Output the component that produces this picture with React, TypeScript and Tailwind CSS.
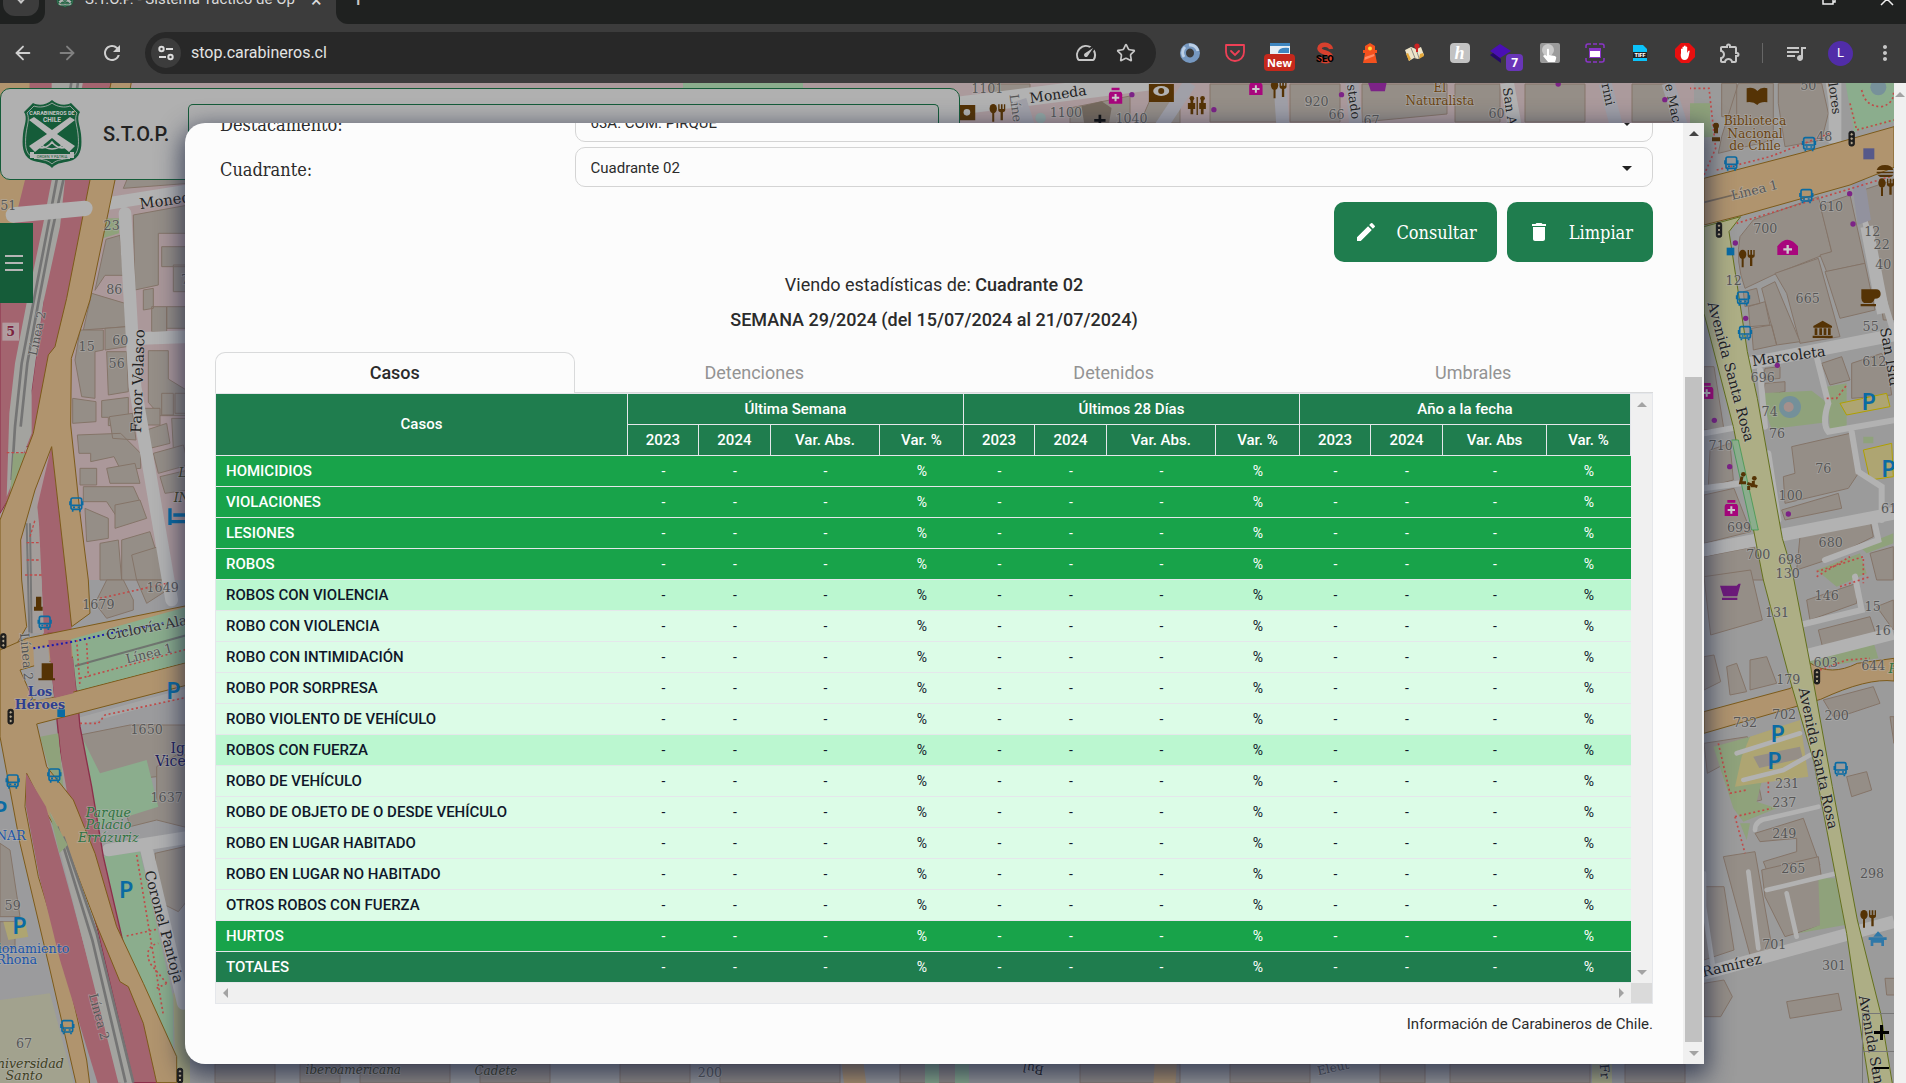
import React from "react";
import { ArrowLeft, ArrowRight, Star } from "lucide-react";
import {
  MdRefresh,
  MdOutlineSpeed,
  MdOutlineExtension,
  MdQueueMusic,
  MdMoreVert,
  MdEdit,
  MdDelete,
} from "react-icons/md";

type Row = { label: string; tone: "main" | "sub" | "item" | "total" };

const rows: Row[] = [
  { label: "HOMICIDIOS", tone: "main" },
  { label: "VIOLACIONES", tone: "main" },
  { label: "LESIONES", tone: "main" },
  { label: "ROBOS", tone: "main" },
  { label: "ROBOS CON VIOLENCIA", tone: "sub" },
  { label: "ROBO CON VIOLENCIA", tone: "item" },
  { label: "ROBO CON INTIMIDACIÓN", tone: "item" },
  { label: "ROBO POR SORPRESA", tone: "item" },
  { label: "ROBO VIOLENTO DE VEHÍCULO", tone: "item" },
  { label: "ROBOS CON FUERZA", tone: "sub" },
  { label: "ROBO DE VEHÍCULO", tone: "item" },
  { label: "ROBO DE OBJETO DE O DESDE VEHÍCULO", tone: "item" },
  { label: "ROBO EN LUGAR HABITADO", tone: "item" },
  { label: "ROBO EN LUGAR NO HABITADO", tone: "item" },
  { label: "OTROS ROBOS CON FUERZA", tone: "item" },
  { label: "HURTOS", tone: "main" },
  { label: "TOTALES", tone: "total" },
];

const toneClass = {
  main: "bg-[#18a34a] text-white",
  sub: "bg-[#bbf7d0] text-[#0f172a]",
  item: "bg-[#dcfce7] text-[#0f172a]",
  total: "bg-[#1f7d4e] text-white",
};

const groups = [
  { title: "Última Semana", abs: "Var. Abs." },
  { title: "Últimos 28 Días", abs: "Var. Abs." },
  { title: "Año a la fecha", abs: "Var. Abs" },
];

/* ---------- Map ---------- */

const ROAD = "#b2b2b2";
const ORANGE = "#b0946e";
const RED = "#a3646f";
const BUILD = "#958e87";
const BLUE = "#0a6ba3";
const BROWN = "#553305";

type LabelProps = { x: number; y: number; t: string; s?: number; r?: number; c?: string; i?: boolean; b?: boolean };

function Label({ x, y, t, s = 38, r = 0, c = "#565656", i, b }: LabelProps) {
  return (
    <text
      x={x}
      y={y}
      transform={`rotate(${r} ${x} ${y})`}
      textAnchor="middle"
      dominantBaseline="central"
      fontSize={s}
      fill={c}
      stroke="#b4b4b4"
      strokeOpacity={0.5}
      strokeWidth={5}
      paintOrder="stroke"
      fontStyle={i ? "italic" : "normal"}
      fontWeight={b ? 700 : 400}
    >
      {t}
    </text>
  );
}

function Bus({ x, y }: { x: number; y: number }) {
  return (
    <g transform={`translate(${x - 18} ${y - 21})`}>
      <rect x="2" y="2" width="32" height="34" rx="5" fill="none" stroke={BLUE} strokeWidth="5" />
      <path d="M-1 12v12M37 12v12M4 24h28M7 38v5M29 38v5" stroke={BLUE} strokeWidth="5" />
      <path d="M8 30h6M22 30h6" stroke={BLUE} strokeWidth="5" />
    </g>
  );
}

function Parking({ x, y }: { x: number; y: number }) {
  return (
    <text x={x} y={y} textAnchor="middle" dominantBaseline="central" fontSize={66} fontWeight={700} fill={BLUE} fontFamily="Lato, sans-serif">
      P
    </text>
  );
}

function Light({ x, y }: { x: number; y: number }) {
  return (
    <g transform={`translate(${x} ${y})`} fill="#b2a58c" stroke="#1c1c1c" strokeWidth="3">
      <rect x="-8" y="-22" width="16" height="44" rx="6" fill="#1c1c1c" />
      <circle cy="-13" r="5" />
      <circle r="5" />
      <circle cy="13" r="5" />
    </g>
  );
}

function Food({ x, y }: { x: number; y: number }) {
  return (
    <g transform={`translate(${x} ${y})`} fill={BROWN}>
      <ellipse cx="-12" cy="-13" rx="11" ry="14" />
      <path d="M-15 0h6v26h-6zM3 -26h4v14h4v-14h5v14h4v-14h4v18q0 5-7 6v24h-7V-2q-7-1-7-6z" />
    </g>
  );
}

function Pharmacy({ x, y }: { x: number; y: number }) {
  return (
    <g transform={`translate(${x} ${y})`}>
      <path d="M-12 -26h24v8h-24zM-16 -14h32q4 3 4 8v28h-40v-28q0-5 4-8z" fill="#a8067d" />
      <path d="M0 -7v22M-11 4h22" stroke="#ccc" strokeWidth="6" />
    </g>
  );
}

function Dot({ x, y }: { x: number; y: number }) {
  return <circle cx={x} cy={y} r="8" fill="#7c2387" />;
}

const leftBuildings = [
  "M370 325l20-48h190v32z",
  "M400 405l165-30v85h-90v155l-70 15z",
  "M318 478l42-12 10 120-55 0-30 45z",
  "M485 500h80v60h-80zM520 555h50v80h-50zM430 630l30-5v60l-30 5zM455 680h45v75h-45zM500 680h70v65h-70z",
  "M275 640l100 30 5 70-130 10z",
  "M240 750h70v60l-25 5v140l-40-5-20-110zM315 745l65-5v60l-65 10zM320 815h60l5 120-60 10z",
  "M445 812h60v85l65 40v70h-90l-35-40z",
  "M218 955l70 10v60l-70 5zM305 962l80-10v80l-60 5v-25h-20z",
  "M328 1010l70-10 10 80-70-5zM232 1065l130-5 60 60v45l-60 5-20-40-70 15 0-25-35 0z",
  "M240 1165h50v50h-50zM320 1165l85-15 15 60-90 0z",
  "M250 1220l150 0 20 45-60 60-40-60-70 0zM255 1285l70 30v60l-65 10z",
  "M345 1275l75-15 20 55-95 30zM300 1390l55-10 10 120-65 0zM365 1380l85-25 45 145-130 0z",
  "M395 1425l80-25 25 100h-90z",
  "M430 985h50v50h-60zM485 940h35v65h-35zM525 940h40v60h-40zM440 1050l60-20 10 60-60 15zM515 1015h50v90h-45z",
  "M460 1120l90-25 15 60-90 25zM480 1190l85-20v60l-70 10z",
  "M320 1500l50 0 30 60v30l-80 25-35-45zM410 1500l80 0 20 25-70 45z",
  "M240 1965l150-30h180v80l-50 70-100 10-140 40z",
  "M470 2060l60-35h40v220l-100-25-80 20-10-35 90-30z",
  "M465 2320l110-25v150l-40 50-60-30z",
  "M0 2290l30 20 30 200-60 0z",
  "M0 2525h45v80H0z",
];

const rightBuildings = [
  "M95 10h45v100H95zM145 10h105v170l-165 40 10-50z",
  "M265 10h130l20 90-20 80-110 20-20-130z",
  "M150 470l40-50 195-70 40 165-165 65-95 45q-30-80-15-155z",
  "M390 375l90-30 45 205-115 25-20-50 35-10z",
  "M520 330l90-30v420h-30z",
  "M255 580l130-45 65 235-120 20-40-150z",
  "M405 575l120-25 30 140-105 25z",
  "M160 635l40-10 10 45-45 10zM175 680l50-15 15 70-60 5zM185 745l60-10 15 60-70 15zM215 625l40-20 75 180-70 10z",
  "M225 865l45-5v35l-50 5zM225 910l60-5v30l-65 10z",
  "M395 850l60-20 25 70-60 15zM485 850l90-30 20 50 10 75-120 10z",
  "M305 1100l175-40 25 120-30 45-190 45-5-80 35-10z",
  "M275 1290l170-50 10 45-170 35z",
  "M330 1370l210-50 10 50-140 70-90 30z",
  "M60 1110l60-20 10 110-75 20zM42 1245l90-20 50 130-140 35z",
  "M42 1430l150-30 40 100H42zM540 1420l70-20v100h-50z",
  "M42 860l30 0 30 190-60 0z",
  "M42 1490l140-20 35 150-155 45z",
  "M42 1730l30-5 20 80-50 25zM110 1760l30-10 30 85-50 10zM180 1740l50-10 30 80-80 20z",
  "M350 1560l150-50 0 60-140 50z",
  "M385 1650l155-40 20 60-160 40zM560 1580l50-20v90z",
  "M400 1860l150-40 20 50-90 30-50 10z",
  "M600 1910h12v80z",
  "M42 1990l130-20 10 40-130 70zM190 2010l130-30 20 30-130 30zM140 2030h30v35h-30z",
  "M165 2120l40-10 10 50-45 10zM470 2090l60-15 15 55-60 20z",
  "M195 2260l145-45 50 140-150 40-20-50 100-30 0-40-110 10z",
  "M100 2330l95-15 55 310-70 0z",
  "M42 2420h60l30 190-90 30z",
  "M215 2370l170-40 30 200-130 40-60-120z",
  "M290 2765l155-25 10 50-155 25zM42 2710l60-10 25 50-35 60-50 0zM585 2695h30v50h-25z",
];

const topBuildings =
  "M990 84h40v12l-40 6zM1070 108l60-12v27h-60zM1150 100h30v23h-40zM1210 84h70v38h-70zM1290 84h50v38h-50zM1362 84h85v30l-85 8zM1455 84h45v38h-45zM1525 84h60v38h-60zM1632 84h40v38h-40z";

const bottomBuildings =
  "M215 1064h60v19h-60zM300 1064h40v19h-40zM360 1064h90v19h-90zM480 1064h70v19h-70zM620 1064h70v19h-70zM720 1064h120v19h-120zM900 1064h60v19h-60zM1080 1064h100v19h-100zM1230 1064h80v19h-80zM1380 1064h45v19h-45zM1450 1064h140v19h-140zM1625 1064h60v19h-60z";

function StreetMap() {
  return (
    <svg
      className="absolute inset-0 h-full w-full"
      viewBox="0 83 1894 1000"
      preserveAspectRatio="xMinYMin slice"
      fontFamily="'DejaVu Serif', serif"
      aria-hidden="true"
    >
      <rect y="83" width="1894" height="1000" fill="#9b9b9b" />

      {/* upper and lower strips */}
      <rect x="190" y="83" width="1504" height="45" fill="#ab9a9c" />
      <path d={topBuildings} fill={BUILD} stroke="#857468" />
      <path d={bottomBuildings} fill={BUILD} stroke="#857468" />
      <rect x="683" y="83" width="120" height="8" fill="#8bad8d" />
      <path d="M940 108l110-14 110-14" stroke={ROAD} strokeWidth="18" fill="none" />
      <path d="M1280 83l3 45M1352 83l4 45M1605 83l12 45M1668 83l14 45M1190 83l-30 45M1020 100l8 25" stroke="#a0a0a8" strokeWidth="13" />
      <path d="M1507 83l8 45" stroke={ROAD} strokeWidth="14" />
      <path d="M852 1060l4 30M1166 1060l-2 30" stroke={ORANGE} strokeWidth="22" />
      <path d="M1602 1060v30" stroke="#adae85" strokeWidth="20" />
      <path d="M925 1064h14v19h-14zM955 1064h14v19h-14z" fill="#8bad8d" />
      <g transform="translate(0 83) scale(.3333)">
        <Label x={3174} y={33} t="Moneda" s={42} r={-8} c="#222" />
        <Label x={2962} y={17} t="1101" />
        <Label x={3198} y={90} t="1100" />
        <Label x={3395} y={106} t="1040" />
        <Label x={3048} y={75} t="Líne" r={82} />
        <Label x={3950} y={57} t="920" />
        <Label x={4010} y={95} t="66" />
        <Label x={4115} y={112} t="67" />
        <Label x={4320} y={14} t="El" s={36} c="#6b4410" />
        <Label x={4320} y={55} t="Naturalista" s={36} c="#6b4410" />
        <Label x={4490} y={92} t="60" />
        <Label x={4062} y={56} t="stado" r={82} c="#222" />
        <Label x={4530} y={70} t="San A" r={82} c="#222" />
        <Label x={4825} y={34} t="rini" r={78} c="#222" />
        <Label x={5020} y={60} t="e Mac" r={78} c="#222" />
        <Pharmacy x={3347} y={40} />
        <Pharmacy x={3768} y={14} />
        <Food x={2992} y={90} />
        <Food x={3836} y={20} />
        <path d="M3447 3h75v54h-75zM2876 66h50v46h-50z" fill={BROWN} />
        <ellipse cx="3484" cy="24" rx="24" ry="15" fill="#b2b2b2" />
        <circle cx="3484" cy="24" r="9" fill={BROWN} />
        <circle cx="2901" cy="88" r="10" fill="#b2b2b2" />
        <path d="M3572 44h8v50h-8zM3590 42h4v54h-4zM3603 44h8v50h-8zM3564 60h22v18h-22zM3598 60h20v18h-20z" fill={BROWN} />
        <circle cx="3576" cy="46" r="7" fill={BROWN} />
        <circle cx="3608" cy="46" r="7" fill={BROWN} />
        <path d="M3245 70l60-15 30 20-10 60h-70z" fill="#756a5e" />
        <path d="M3300 95v34M3283 112h34" stroke="#111" strokeWidth="8" />
        <circle cx="3122" cy="105" r="16" fill="#94a8a4" />
        <path d="M4105 0h55l-5 25h-42z" fill="#7c2387" />
        <Dot x={4025} y={35} />
        <Dot x={4675} y={3} />
        <Dot x={4995} y={50} />
        <Dot x={3642} y={80} />
        <Dot x={3396} y={35} />
        <Label x={1060} y={2962} t="iberoamericana" s={36} i c="#40401f" />
        <Label x={1488} y={2965} t="Cadete" s={36} i c="#40401f" />
        <Label x={2130} y={2968} t="200" />
        <Label x={3100} y={2958} t="Bul" r={190} c="#222" />
        <Label x={4000} y={2955} t="Eleut" r={-12} s={36} c="#555" />
        <Label x={4815} y={2965} t="Fr" r={85} c="#222" />
      </g>

      {/* west side */}
      <g transform="translate(0 80) scale(.33333)">
        <path d="M0 0h570v1500H0z" fill="#ab989a" />
        <path d="M0 1500h570v1600H0z" fill="#9b9b9d" />
        {leftBuildings.map((d) => (
          <path key={d} d={d} fill={BUILD} stroke="#857468" strokeWidth="3" />
        ))}
        <path d="M315 415h42v45l-48 15z" fill="#8fa27b" />
        <path d="M0 2760l150-20 100 380H0z" fill="#a2a28e" />
        <path d="M10 2525l65 0 10 45-60 10z" fill="#aea572" />

        <path d="M210 1690l360-110v180l-330 95z" fill="#8bad8d" />
        <path d="M240 1960l60 120 140-40 35 140-190 60-50-40z" fill="#8bad8d" />
        <path d="M300 2330l120-15 100 440v250l-120-200-90-300z" fill="#8bad8d" />
        <path d="M520 2740l50-35v420h-40z" fill="#a3a47d" />

        <path d="M330 370l250-40M375 400l30 520 110 640M425 775l145-5M325 2310l250-40M440 2310l110 460" fill="none" stroke={ROAD} strokeWidth="38" strokeLinecap="round" />
        <path d="M235 1925l330-90" stroke="#a5a5a5" strokeWidth="22" />

        {/* motorway, rail corridor and service roads */}
        <path d="M90 0h175v300L100 930l-40 270-60 100V600z" fill={RED} stroke="#8b2f4a" strokeWidth="3" />
        <path d="M195 0h140L205 660 100 1100 60 1100 95 930 130 660z" fill={RED} stroke="#8b2f4a" strokeWidth="3" />
        <path d="M155 0h95L195 300 180 440 130 668 95 930 95 1060 20 1250 28 1000 45 850 80 668 130 430 155 300z" fill="#a3a39f" />
        <path d="M215 0L170 300 140 460 100 668 65 850 45 1040 35 1200M235 0L190 300 155 460 115 668 82 850 62 1040" fill="none" stroke="#747474" strokeWidth="8" />
        <path d="M40 1120h45l-30 130-30 60z" fill="#8fa27b" />
        <path d="M0 0h90L75 300 40 440 0 660z" fill={ORANGE} />
        <path d="M155 1095l25 225 35 240 0 90-85 30-5-180-25-170z" fill={RED} />
        <path d="M72 1310l35-80 10 100 15 330-50 0-15-150z" fill="#a39d9a" />
        <path d="M90 1330l5 330M80 1330l8 330" stroke="#777" strokeWidth="6" />
        <path d="M335 0h60L345 300 270 660 214 835 212 1035 240 1300 265 1500 270 1600 215 1640 200 1500 155 1100 105 1230 62 1380 65 1500 80 1640 0 1780V1320L100 1060 145 825 165 800 200 655 270 300z" fill={ORANGE} stroke="#7c5a1a" strokeWidth="3" />
        <g transform="translate(0 1440)">
          <path d="M145 220h70l25 280 35 180 35 210 60 260 60 150 50 268h-80L290 1100 195 720z" fill={RED} stroke="#8b2f4a" strokeWidth="4" />
          <path d="M100 260h50l15 230 35 200-15 30-60-120z" fill="#a09c99" />
          <path d="M120 530l55-10 15 160-30-10z" fill="#8fa27b" />
          <path d="M0 270L80 235 570 135v68L215 292 145 305 60 330 100 420 160 412 570 305v68L110 492 140 620 220 720 285 880 350 1100 430 1270 530 1490v78h-60L430 1390l-45-110-25-15-70-170L200 860l-60-100-60-120-5 100 40 210 80 260 65 290 10 78H230L150 1230 60 850 0 530z" fill={ORANGE} stroke="#7c5a1a" strokeWidth="3" />
          <path d="M213 238l357-100v165l-340 88z" fill="#8bad8d" />
          <path d="M145 240h68l7 160-57 14z" fill={RED} />
          <path d="M100 262h45l12 150-50 10z" fill="#a09c99" />
          <path d="M78 640l60 100 75 270 150 560h-70L180 1200 118 950 78 740z" fill={RED} />
          <path d="M150 755l50 100 90 250 110 463h-45L180 870z" fill="#a3a39f" />
          <path d="M172 800l105 340 100 428M190 830l100 290 110 448" fill="none" stroke="#747474" strokeWidth="8" />
          <path d="M148 755l55 100-25 25z" fill="#8fa27b" />
          <path d="M225 318l345-95" stroke="#6f756f" strokeWidth="6" />
          <path d="M100 265l120-20 110-25 160-30" fill="none" stroke="#1a1ab0" strokeWidth="6" strokeDasharray="6 8" />
          <path d="M230 240l10 140M260 250l5 100M240 355l330-90M240 490h55l20-25 255-55M410 885l80 480M380 1128l90-20M500 1270l-50-60q-20-50 25-60M500 1270l-30 15M300 115l200-45" fill="none" stroke="#c04a48" strokeWidth="5" strokeDasharray="6 8" />
          <Label x={295} y={133} t="1679" />
          <Label x={488} y={82} t="1649" />
          <Label x={440} y={202} t="Ciclovía·Ala" s={41} r={-11} c="#333" />
          <Label x={447} y={280} t="Línea 1" r={-14} />
          <Label x={80} y={290} t="Línea 2" r={85} />
          <Label x={120} y={395} t="Los" c="#2f3f8f" b />
          <Label x={120} y={434} t="Héroes" c="#2f3f8f" b />
          <Label x={440} y={508} t="1650" />
          <Label x={540} y={565} t="Igl" c="#20205f" s={42} />
          <Label x={525} y={602} t="Vicen" c="#20205f" s={42} />
          <Label x={500} y={713} t="1637" />
          <Label x={325} y={757} t="Parque" c="#2f7340" i />
          <Label x={325} y={795} t="Palacio" c="#2f7340" i />
          <Label x={325} y={832} t="Errázuriz" c="#2f7340" i />
          <Label x={25} y={826} t="INAR" c="#1c55a8" />
          <Label x={38} y={1038} t="59" />
          <Label x={90} y={1165} t="cionamiento" c="#1c55a8" />
          <Label x={50} y={1200} t="Rhona" c="#1c55a8" />
          <Label x={492} y={1100} t="Coronel Pantoja" s={43} r={75} c="#222" />
          <Label x={298} y={1370} t="Línea 2" r={75} />
          <Label x={72} y={1450} t="67" />
          <Label x={75} y={1510} t="Universidad" c="#40401f" i />
          <Label x={72} y={1547} t="Santo" c="#40401f" i />
          <path d="M125 310h34v45h6v6h-50v-6h10zM108 110h16v30h4v12h-26v-12h6z" fill={BROWN} />
          <rect x="172" y="448" width="23" height="23" fill={BLUE} />
          <Parking x={520} y={392} />
          <Parking x={378} y={990} />
          <Parking x={58} y={1097} />
          <Parking x={0} y={750} />
          <Bus x={134} y={188} />
          <Bus x={38} y={664} />
          <Bus x={163} y={646} />
          <Bus x={202} y={1401} />
          <Light x={10} y={243} />
          <Light x={32} y={470} />
          <Light x={540} y={1547} />
        </g>
        <path d="M40 405L255 385" stroke={ROAD} strokeWidth="46" strokeLinecap="round" />
        <path d="M20 1118h60M90 1370l15-50M80 1388h40M80 1440h40M75 1485h50" stroke="#c04a48" strokeWidth="4" strokeDasharray="8 6" />
        <Label x={25} y={378} t="51" />
        <Label x={495} y={360} t="Moned" s={44} r={-8} c="#222" />
        <Label x={335} y={437} t="23" />
        <Label x={343} y={630} t="86" />
        <Label x={260} y={799} t="15" />
        <Label x={361} y={781} t="60" />
        <Label x={350} y={850} t="56" />
        <Label x={555} y={600} t="7" />
        <Label x={412} y={903} t="Fanor Velasco" s={44} r={-88} c="#222" />
        <Label x={112} y={760} t="Línea 2" r={-78} s={36} />
        <rect x="7" y="728" width="50" height="54" fill="#b19a9e" />
        <Label x={32} y={754} t="5" c="#7c2340" b />
        <Bus x={229} y={1273} />
        <path d="M510 1285v50M510 1325h50M520 1305h50" stroke={BLUE} strokeWidth="10" />
        <Label x={548} y={1178} t="L" i c="#40401f" />
        <Label x={545} y={1252} t="IN" i c="#40401f" />
      </g>

      {/* east side */}
      <g transform="translate(1690 80) scale(.33333)">
        {rightBuildings.map((d) => (
          <path key={d} d={d} fill={BUILD} stroke="#857468" strokeWidth="3" />
        ))}
        <path d="M465 0h147v125l-120 30z" fill="#8bad8d" />
        <path d="M0 70h60v50l10 50-70 5z" fill="#8fa27b" />
        <circle cx="565" cy="22" r="24" fill="#77919a" />
        <path d="M215 940l150-8 45 35v60l-165 20q-20-50-30-107zM410 920l60-10 0 140-50 5zM380 1470l130-50 20 60-90 40zM520 1070h30v20h-30zM510 1400l100-40v30l-80 30z" fill="#8fa27b" />
        <path d="M450 970l140-30 10 40-130 25zM520 1110l85-20 5 100-70 10z" fill="#aea572" stroke="#b0a000" strokeWidth="3" />
        <circle cx="300" cy="981" r="33" fill="#74909a" />
        <circle cx="296" cy="981" r="15" fill="#a5908c" />
        <path d="M70 2000l130-35 20 120-20 80 60 20-100 40-30-40zM180 2230h-30l20 50zM385 2395l50 0 30 140-140 25 65-25z" fill="#8fa27b" />
        <path d="M350 1745l200-60 15 50-200 30z" fill="#8fa27b" />
        <path d="M180 1970l150-50 25 170-150 20-70 10 20-90z" fill="#aea572" />
        <path d="M190 2030l140-30 8 34-130 30z" fill={BUILD} />

        <path d="M415 0l25 170M500 300l60 290 55 180M180 850L612 765M380 830l35 140q-20 60 0 85l200-35M485 1055l20 120 70 45V1320M42 1060l110-20M42 1225l110-15M42 1420L612 1290M210 870l15 170M235 1120l30 200M550 1310l15 70-160 60M495 1490l20 100-185 45" fill="none" stroke={ROAD} strokeWidth="18" strokeLinecap="round" />
        <path d="M435 0v190M530 440l50 260M180 850L612 765M42 1410L612 1300M355 1725l255-65M42 2680L612 2525" fill="none" stroke={ROAD} strokeWidth="38" />
        <path d="M485 300l38-10 20 130-40 15z" fill="#92929e" />
        <path d="M42 2380v100l30 200M175 2375l30 230M290 2440l30 130M230 2430l210-50M195 2250q0-30 40-35l150-35M140 2020l190-60M160 2100l120-30 90-50" fill="none" stroke={ROAD} strokeWidth="14" strokeLinecap="round" />

        <path d="M42 295L330 220 612 140v122L480 315 160 405 42 435z" fill={ORANGE} stroke="#7c5a1a" strokeWidth="3" />
        <path d="M42 1895l260-70 60-75q60 40 140 0l110-15v68q-80-10-220 55L42 1960z" fill={ORANGE} stroke="#7c5a1a" strokeWidth="3" />
        <path d="M42 440l110-30-35 45 55 360 30 140 75 420 30 100 55 285 65 360 75 400 70 280 40 240h-70L520 2900 470 2560 370 2040 300 1800 220 1500 130 1040 42 700z" fill="#adae85" stroke="#63701c" strokeWidth="3" />
        <path d="M125 1080l20 0 60 270h-20z" fill="#8bad8d" stroke="#2e9444" strokeWidth="2" />
        <path d="M42 285l35-80-20-180H0M80 270l160-40 180-70M480 70l20 80 112-30M515 30q10 50 60 50 40-10 35-50M600 290l-460 140M410 955h30l30-40M380 1475l140-45v80M85 1990l35 150 50-10M135 2210l110-25M135 2210l30 110M235 2105v40M390 1770l80-30 70-5M380 1490l100-60M450 1520l90-30" fill="none" stroke="#c04a48" strokeWidth="5" strokeDasharray="6 8" />
        <path d="M42 367l100-25" stroke="#76695a" strokeWidth="5" />

        <path d="M170 25q20-5 32 8 12-13 30-8v42q-20-3-30 8-12-11-32-8z" fill={BROWN} />
        <Label x={355} y={15} t="50" />
        <Label x={195} y={124} t="Biblioteca" s={37} c="#6b4410" />
        <Label x={195} y={161} t="Nacional" s={37} c="#6b4410" />
        <Label x={195} y={198} t="de Chile" s={37} c="#6b4410" />
        <Label x={435} y={55} t="lores" r={82} c="#222" />
        <Label x={403} y={170} t="48" />
        <Label x={193} y={330} t="Línea 1" r={-14} />
        <Label x={423} y={380} t="610" />
        <Label x={226} y={447} t="700" />
        <Label x={131} y={601} t="12" />
        <Label x={547} y={456} t="12" />
        <Label x={575} y={493} t="22" />
        <Label x={580} y={555} t="40" />
        <Label x={353} y={657} t="665" />
        <Label x={542} y={740} t="55" />
        <Label x={296} y={828} t="Marcoleta" s={43} r={-8} c="#222" />
        <Label x={123} y={875} t="Avenida Santa Rosa" s={43} r={75} c="#222" />
        <Label x={600} y={830} t="San Isid" s={43} r={80} c="#222" />
        <Label x={218} y={894} t="696" />
        <Label x={553} y={846} t="612" />
        <Label x={239} y={994} t="74" />
        <Label x={261} y={1060} t="76" />
        <Label x={400} y={1167} t="76" />
        <Label x={92} y={1098} t="710" />
        <Label x={302} y={1248} t="100" />
        <Label x={147} y={1342} t="699" />
        <Label x={597} y={1286} t="61" />
        <Label x={422} y={1389} t="680" />
        <Label x={205} y={1425} t="700" />
        <Label x={300} y={1440} t="698" />
        <Label x={293} y={1482} t="130" />
        <Label x={410} y={1548} t="146" />
        <Label x={548} y={1581} t="15" />
        <Label x={578} y={1653} t="16" />
        <Label x={261} y={1597} t="131" />
        <Label x={407} y={1749} t="603" />
        <Label x={550} y={1757} t="644" />
        <Label x={608} y={1766} t="P" i c="#2f7340" />
        <Label x={295} y={1798} t="179" />
        <Label x={282} y={1903} t="702" />
        <Label x={165} y={1928} t="732" />
        <Label x={440} y={1907} t="200" />
        <Label x={385} y={2035} t="Avenida Santa Rosa" s={43} r={78} c="#222" />
        <Label x={291} y={2111} t="231" />
        <Label x={283} y={2167} t="237" />
        <Label x={283} y={2261} t="249" />
        <Label x={310} y={2366} t="265" />
        <Label x={546} y={2381} t="298" />
        <Label x={253} y={2595} t="701" />
        <Label x={125} y={2656} t="Ramírez" s={43} r={-13} c="#222" />
        <Label x={432} y={2656} t="301" />
        <Label x={548} y={2900} t="Avenida Santa" s={43} r={80} c="#222" />

        <path d="M72 130h12v30h-12zM66 172h24v12H66z" fill={BROWN} />
        <circle cx="78" cy="137" r="9" fill={BROWN} />
        <path d="M262 525v-26q30-40 62 0v26z" fill="#a8067d" />
        <path d="M293 495v26M280 508h26" stroke="#ccc" strokeWidth="7" />
        <path d="M370 738l28-16 28 16v5h-56zM374 745h8v20h-8zM388 745h8v20h-8zM401 745h8v20h-8zM414 745h8v20h-8zM368 767h60v7h-60z" fill={BROWN} />
        <path d="M514 628h44q14 0 14 14t-18 14q-4 12-12 13h-20q-8-4-8-14zM512 672h46v7h-46z" fill={BROWN} />
        <path d="M560 270q5-15 25-15t25 15zM560 275h50v5h-50zM562 284h48q-3 7-10 7h-30z" fill={BROWN} />
        <Food x={588} y={322} />
        <Food x={170} y={536} />
        <Food x={534} y={2517} />
        <path d="M156 1190l-4 18h16M172 1210l30 10M190 1203v14h-8M176 1218v12" stroke={BROWN} strokeWidth="9" fill="none" />
        <circle cx="160" cy="1183" r="7" fill={BROWN} />
        <circle cx="193" cy="1195" r="7" fill={BROWN} />
        <path d="M520 205h33v33h-33z" fill="#56598a" />
        <path d="M110 503h23v23h-23z" fill={BLUE} />
        <path d="M90 1517h50l6-6h6l-10 38h-42zM96 1553h46v7h-46z" fill="#6c1a7a" />
        <path d="M536 2572h54v8h-8v18h-8v-10h-24v10h-8v-18h-6zM550 2570l14-16 16 16z" fill="#2f78a8" />
        <Pharmacy x={50} y={935} />
        <Pharmacy x={124} y={1286} />
        <Dot x={136} y={489} />
        <Dot x={479} y={341} />
        <Dot x={489} y={432} />
        <Dot x={167} y={715} />
        <Dot x={262} y={856} />
        <Dot x={73} y={1021} />
        <Dot x={119} y={1160} />
        <Dot x={295} y={1302} />
        <Bus x={124} y={250} />
        <Bus x={357} y={192} />
        <Bus x={349} y={348} />
        <Bus x={159} y={655} />
        <Bus x={165} y={759} />
        <Bus x={452} y={2067} />
        <Light x={485} y={176} />
        <Light x={87} y={450} />
        <Light x={381} y={1790} />
        <Parking x={536} y={966} />
        <Parking x={595} y={1165} />
        <Parking x={263} y={1960} />
        <Parking x={253} y={2043} />
      </g>
    </svg>
  );
}

/* ---------- Browser chrome ---------- */

function Shield({ className }: { className: string }) {
  return (
    <svg viewBox="0 0 62 70" className={className} aria-hidden="true">
      <path d="M31 1c5 5 14 6 19 3l9 9c-4 6 0 13 1 22 1 11 1 21-8 26-8 3-16 2-21 8-5-6-13-5-21-8C1 56 1 46 2 35c1-9 5-16 1-22l9-9c5 3 14 2 19-3z" fill="#155c39" />
      <path d="M31 4c5 4 13 5 18 3l7 7c-3 6 0 12 1 21 1 10 1 19-6 23-8 3-15 2-20 7-5-5-12-4-20-7-7-4-7-13-6-23 1-9 4-15 1-21l7-7c5 2 13 1 18-3z" fill="none" stroke="#b5b5b5" strokeWidth="0.8" />
      <text x="31" y="16" fontSize="5.5" textAnchor="middle" fill="#c4c4c4" fontWeight="700" fontFamily="Roboto, sans-serif">CARABINEROS DE</text>
      <text x="31" y="22.5" fontSize="6.5" textAnchor="middle" fill="#c4c4c4" fontWeight="700" fontFamily="Roboto, sans-serif">CHILE</text>
      <path d="M8 21l5-3 18 13 18-13 5 3-18 14 18 12-6 6-6-5-11-9-11 9-6 5-6-6 18-12z" fill="#b5b5b5" />
      <path d="M17 48q8 3 14-5 6 8 14 5M22 40q-6 8 9 10 15-2 9-10" fill="none" stroke="#b5b5b5" strokeWidth="1.6" />
      <path d="M9 53h4v2h36v-2h4v6h-4v1H13v-1H9z" fill="#b5b5b5" />
      <text x="31" y="59.3" fontSize="4" textAnchor="middle" fill="#155c39" fontFamily="Roboto, sans-serif">ORDEN Y PATRIA</text>
    </svg>
  );
}

function Ext({ name, children }: { name: string; children: React.ReactNode }) {
  return (
    <button type="button" aria-label={name} className="relative flex h-10 w-[45px] items-center justify-center">
      {children}
    </button>
  );
}

function Extensions() {
  return (
    <>
      <Ext name="Anillo">
        <svg viewBox="0 0 20 20" className="size-5"><circle cx="10" cy="10" r="7" fill="none" stroke="#7698c0" strokeWidth="6" /><path d="M4 14a8 8 0 0 1 1-10M9 2a8 8 0 0 1 9 6" fill="none" stroke="#bcd0e6" strokeWidth="3" /><ellipse cx="10" cy="10" rx="3" ry="4.5" fill="#3c3c3c" /></svg>
      </Ext>
      <Ext name="Pocket">
        <svg viewBox="0 0 20 20" className="size-5" fill="none" stroke="#ee4056" strokeWidth="1.8"><path d="M1 2h18v7a9 9 0 0 1-18 0z" strokeLinejoin="round" /><path d="M6 8l4 4 4-4" strokeLinecap="round" /></svg>
      </Ext>
      <Ext name="Novedades">
        <svg viewBox="0 0 20 20" className="size-5"><path d="M0 0h20v20H0z" fill="#e6eef5" /><path d="M0 0h20v3H0zM8 10q0-6 11-5v5z" fill="#3e86c0" /></svg>
        <span className="absolute top-[21px] rounded bg-[#c5281c] px-[3px] font-['Open_Sans',sans-serif] text-[11px] leading-[17px] font-bold text-white">New</span>
      </Ext>
      <Ext name="SEO">
        <svg viewBox="0 0 20 20" className="size-5 overflow-visible" fontFamily="Roboto, sans-serif" fontWeight="900" textAnchor="middle">
          <path d="M16 6C15.500 1 5 0 4.500 5.500 4.500 10 16 9 16 14c0 6-11 5.500-12 0" fill="none" stroke="#d8402e" strokeWidth="4.500" />
          <text x="10" y="18.500" fontSize="9.500" fill="#000">SEO</text>
        </svg>
      </Ext>
      <Ext name="Faro">
        <svg viewBox="0 0 20 20" className="size-5"><path d="M10 0l5 3v4h2v3h-2l2 10H3l2-10H3V7h2V3z" fill="#f4511e" /><circle cx="10" cy="5.500" r="2" fill="#ffd93b" /><path d="M5 14l9-3 .5 2L4.500 17z" fill="#ff8a65" /></svg>
      </Ext>
      <Ext name="Mapa">
        <svg viewBox="0 0 20 20" className="size-5"><path d="M0 7l6-3 5 2 5-2 3 8-6 4-4-1-5 3z" fill="#eee4c8" /><path d="M1 11l2-1 3 6-2 2zM15 11l3-1 1 3-5 3z" fill="#e5a839" /><path d="M6 5l4 10M11 6l3 9" stroke="#777" strokeWidth=".8" /><circle cx="12" cy="3" r="2.600" fill="#cc2323" /><path d="M12 4v5" stroke="#cc2323" strokeWidth="2" /></svg>
      </Ext>
      <Ext name="Honey">
        <span className="flex size-5 items-center justify-center rounded bg-[#c2c2c2] font-['Liberation_Serif',serif] text-[18px] leading-5 font-bold text-white italic">h</span>
      </Ext>
      <Ext name="Capas">
        <svg viewBox="0 0 22 20" className="mr-2 h-5 w-6"><path d="M10 1l11 7-11 7L0 8z" fill="#4a0fb5" /><path d="M0 12l3-2 8 6v4z" fill="#240869" /></svg>
        <span className="absolute top-[21px] right-[4px] rounded bg-[#6936b8] px-[5px] font-['Open_Sans',sans-serif] text-[12px] leading-[17px] font-bold text-white">7</span>
      </Ext>
      <Ext name="Toque">
        <svg viewBox="0 0 20 20" className="size-5"><rect width="20" height="20" rx="2" fill="#9b9b9b" /><circle cx="8" cy="7" r="6" fill="#c9c9c9" /><path d="M7 6q2-1 2 1v5l6 1q2 1 1 3l-1 3H8l-5-6q2-2 4 0z" fill="#fff" /></svg>
      </Ext>
      <Ext name="Captura">
        <svg viewBox="0 0 20 20" className="size-5"><path d="M1 5V3q0-2 2-2h3M14 1h3q2 0 2 2v2M19 15v2q0 2-2 2h-3M6 19H3q-2 0-2-2v-2M8 1h4M8 19h4" fill="none" stroke="#8a35c8" strokeWidth="1.5" /><rect x="4" y="5" width="12" height="10" fill="#8a35c8" /><path d="M5 8h10v6H5z" fill="#fff" /></svg>
      </Ext>
      <Ext name="TIFF">
        <svg viewBox="0 0 16 16" className="size-4"><path d="M1 0h10l4 4v12H1z" fill="#0bc3fa" /><path d="M1 7h14v6H1z" fill="#222" /><text x="8" y="12" fontSize="5.500" fontWeight="900" textAnchor="middle" fill="#fff" fontFamily="Roboto, sans-serif">TIFF</text></svg>
      </Ext>
      <Ext name="Bloqueador">
        <svg viewBox="0 0 20 20" className="size-5"><path d="M6 0h8l6 6v8l-6 6H6l-6-6V6z" fill="#e80f0f" /><path d="M6 10V6q1-1 1.500 0v3V4q.7-1 1.500 0v4-5q1-1 1.700 0v5-4q1-1 1.500 0v6l1-2q1-1 1.500 0l-1 5q-1 4-4 4-4 0-4-5z" fill="#fff" /></svg>
      </Ext>
      <Ext name="Extensiones">
        <MdOutlineExtension className="size-6 text-[#c7c7c7]" />
      </Ext>
    </>
  );
}

function BrowserBar() {
  return (
    <header className="shrink-0 bg-[#3c3c3c] font-[Roboto,sans-serif]">
      <div className="flex h-6 items-start overflow-hidden bg-[#3c3c3c]">
        <div className="h-6 w-[45px] rounded-br-xl bg-[#1f2120] pl-[3px]">
          <div className="flex h-4 w-9 justify-center rounded-b-xl bg-[#3c3c3c]">
            <span className="mt-[-6px] size-2 rotate-45 border-r-2 border-b-2 border-[#c7c7c7]" />
          </div>
        </div>
        <div className="flex h-6 w-[291px] items-start pl-[11px]">
          <Shield className="-mt-3 h-5 w-[18px]" />
          <span className="-mt-2.5 ml-[11px] w-[210px] overflow-hidden text-[15px] leading-[18px] whitespace-nowrap text-[#dadada]">S.T.O.P. - Sistema Táctico de Op</span>
          <button type="button" aria-label="Cerrar pestaña" className="-mt-3 ml-4 text-xl leading-6 text-[#dadada]">×</button>
        </div>
        <div className="flex h-6 flex-1 items-start justify-between rounded-bl-xl bg-[#1f2120] pl-4">
          <button type="button" aria-label="Nueva pestaña" className="-mt-3 block text-[22px] leading-6 text-[#c7c7c7]">+</button>
          <svg viewBox="0 0 90 6" className="h-1.5 w-[90px]" fill="none" stroke="#eee" strokeWidth="1.5" aria-hidden="true"><path d="M7 -5v9h10v-9M17 2h2v-6M65 5l12-12M65 -7l12 12" /></svg>
        </div>
      </div>
      <div className="flex h-[59px] items-center pb-px">
        <div className="flex w-[145px] items-center gap-5 pl-3 text-[#cfcfcf]">
          <button type="button" aria-label="Atrás" className="w-6"><ArrowLeft className="size-[22px]" strokeWidth={2} /></button>
          <button type="button" aria-label="Adelante" className="w-6 text-[#808080]"><ArrowRight className="size-[22px]" strokeWidth={2} /></button>
          <button type="button" aria-label="Recargar" className="w-6"><MdRefresh className="size-6" /></button>
        </div>
        <div className="flex h-[42px] flex-1 items-center rounded-full bg-[#282828] pr-5 pl-1.5">
          <button type="button" aria-label="Información del sitio" className="flex size-[30px] items-center justify-center rounded-full bg-[#3c3c3c]">
            <svg viewBox="0 0 16 16" className="size-4" fill="none" stroke="#dcdcdc" strokeWidth="2"><circle cx="3.500" cy="4" r="2.200" /><circle cx="12.500" cy="12" r="2.200" /><path d="M8 4h7M1 12h7" /></svg>
          </button>
          <input aria-label="Dirección" defaultValue="stop.carabineros.cl" className="ml-2.5 min-w-0 flex-1 bg-transparent text-[16px] text-[#e3e3e3] outline-none" />
          <button type="button" aria-label="Rendimiento" className="mr-[18px] text-[#c7c7c7]"><MdOutlineSpeed className="size-6" /></button>
          <button type="button" aria-label="Favorito" className="text-[#c7c7c7]"><Star className="size-5" strokeWidth={2} /></button>
        </div>
        <div className="ml-[11px] flex items-center">
          <Extensions />
          <span className="mx-2.5 h-5 w-px bg-[#666]" />
          <Ext name="Multimedia"><MdQueueMusic className="size-6 text-[#c7c7c7]" /></Ext>
          <Ext name="Perfil"><span className="flex size-[25px] items-center justify-center rounded-full bg-[#512da8] text-[13px] text-white">L</span></Ext>
          <button type="button" aria-label="Menú del navegador" className="flex w-[43px] justify-center"><MdMoreVert className="size-6 text-[#c7c7c7]" /></button>
        </div>
      </div>
    </header>
  );
}

/* ---------- Dialog ---------- */

function Arrow({ dir, dark }: { dir: "up" | "down" | "left" | "right"; dark?: boolean }) {
  const d = { up: "M0 7l5-5 5 5z", down: "M0 3l5 5 5-5z", left: "M7 0L2 5l5 5z", right: "M3 0l5 5-5 5z" }[dir];
  return (
    <svg viewBox="0 0 10 10" className="size-2.5" aria-hidden="true">
      <path d={d} fill={dark ? "#444" : "#a3a3a3"} />
    </svg>
  );
}

function Field({ id, label, value }: { id: string; label: string; value: string }) {
  return (
    <div className="flex h-10 shrink-0 items-center">
      <label htmlFor={id} className="w-1/4 pt-1 pl-[5px] font-['DejaVu_Serif_Condensed','DejaVu_Serif',serif] text-[18px] text-[#2b2b2b]">{label}</label>
      <div className="relative flex-1">
        <select id={id} className="h-10 w-full appearance-none rounded-[10px] border border-[#d4d4d4] bg-transparent px-[15px] pt-0.5 text-[15px] text-[#2b2b2b]">
          <option>{value}</option>
        </select>
        <svg viewBox="0 0 10 5" className="pointer-events-none absolute top-[19px] right-[21px] h-[5px] w-2.5" aria-hidden="true"><path d="M0 0h10L5 5z" fill="#222" /></svg>
      </div>
    </div>
  );
}

const actionClass =
  "flex h-[60px] items-center gap-[18px] rounded-[10px] bg-[#1f7d4e] px-5 font-['DejaVu_Serif_Condensed','DejaVu_Serif',serif] text-[18px] text-white";

function StatsTable() {
  return (
    <div className="border border-[#e5e7eb]">
      <div className="flex">
        <table className="w-full table-fixed border-separate border-spacing-0 text-[15px]">
          <colgroup>
            <col />
            {groups.map((g, i) => (
              <React.Fragment key={g.title}>
                <col className="w-[71px]" />
                <col className="w-[72px]" />
                <col className={i === 2 ? "w-[104px]" : "w-[109px]"} />
                <col className="w-[84px]" />
              </React.Fragment>
            ))}
          </colgroup>
          <thead className="bg-[#1f7d4e] text-white">
            <tr>
              <th rowSpan={2} className="border-r border-b border-[#e5e7eb] font-medium">Casos</th>
              {groups.map((g) => (
                <th key={g.title} colSpan={4} className="h-[31px] border-r border-b border-[#e5e7eb] p-0 font-medium">{g.title}</th>
              ))}
            </tr>
            <tr>
              {groups.map((g) =>
                ["2023", "2024", g.abs, "Var. %"].map((h) => (
                  <th key={g.title + h} className="h-[31px] border-r border-b border-[#e5e7eb] p-0 font-medium">{h}</th>
                )),
              )}
            </tr>
          </thead>
          <tbody>
            {rows.map((r) => (
              <tr key={r.label} className={toneClass[r.tone]}>
                <th scope="row" className="h-[31px] border-b border-[#e5e7eb] p-0 pl-2.5 text-left font-medium">{r.label}</th>
                {groups.map((g) =>
                  ["-", "-", "-", "%"].map((v, i) => (
                    <td key={g.title + i} className="border-b border-[#e5e7eb] p-0 pt-px text-center text-[14px]">{v}</td>
                  )),
                )}
              </tr>
            ))}
          </tbody>
        </table>
        <div className="flex w-[21px] shrink-0 flex-col items-center justify-between bg-[#f0f0f0] py-1.5">
          <Arrow dir="up" />
          <Arrow dir="down" />
        </div>
      </div>
      <div className="flex h-5">
        <div className="flex flex-1 items-center justify-between bg-[#f0f0f0] px-[5px]">
          <Arrow dir="left" />
          <Arrow dir="right" />
        </div>
        <div className="w-[21px] bg-[#dadada]" />
      </div>
    </div>
  );
}

function Dialog() {
  return (
    <section
      role="dialog"
      aria-label="Estadísticas"
      className="absolute top-10 right-[202px] bottom-[19px] left-[185px] flex overflow-hidden rounded-l-[20px] bg-[#fcfcfc] shadow-[0_8px_24px_4px_rgba(20,30,60,0.7)]"
    >
      <div className="min-w-0 flex-1 px-[30px]">
        <div className="-mt-[21px] flex flex-col gap-[5px]">
          <Field id="destacamento" label="Destacamento:" value="63A. COM. PIRQUE" />
          <Field id="cuadrante" label="Cuadrante:" value="Cuadrante 02" />
        </div>
        <div className="mt-[15px] flex justify-end gap-2.5">
          <button type="button" className={actionClass}><MdEdit className="size-6" />Consultar</button>
          <button type="button" className={actionClass}><MdDelete className="size-6" />Limpiar</button>
        </div>
        <p className="mt-[9px] text-center text-[18px] leading-7 text-[#2b2b2b]">Viendo estadísticas de: <strong className="font-medium">Cuadrante 02</strong></p>
        <p className="mt-[7px] text-center text-[18px] leading-7 font-medium text-[#2b2b2b]">SEMANA 29/2024 (del 15/07/2024 al 21/07/2024)</p>
        <div role="tablist" className="mt-[18px] grid grid-cols-4 text-[18px] text-[#939393]">
          <button type="button" role="tab" aria-selected="true" className="h-[41px] rounded-t-[10px] border border-b-0 border-[#d9dadb] pb-0.5 font-medium text-[#2b2b2b]">Casos</button>
          <button type="button" role="tab" className="h-[41px] border-b border-[#d9dadb]">Detenciones</button>
          <button type="button" role="tab" className="h-[41px] border-b border-[#d9dadb]">Detenidos</button>
          <button type="button" role="tab" className="h-[41px] border-b border-[#d9dadb]">Umbrales</button>
        </div>
        <StatsTable />
        <p className="mt-2 text-right text-[15px] leading-6 text-[#2b2b2b]">Información de Carabineros de Chile.</p>
      </div>
      <div className="flex w-[21px] flex-col items-center bg-[#f0f0f0] py-1.5">
        <Arrow dir="up" dark />
        <div className="h-[238px]" />
        <div className="w-[17px] flex-1 bg-[#c1c1c1]" />
        <div className="mt-1.5"><Arrow dir="down" /></div>
      </div>
    </section>
  );
}

export default function App() {
  return (
    <div className="flex h-screen flex-col overflow-hidden font-[Roboto,sans-serif]">
      <BrowserBar />
      <main className="relative flex min-h-0 flex-1">
        <div className="relative flex-1 overflow-hidden">
          <StreetMap />
          <div className="relative mt-[5px] flex h-[92px] w-[960px] items-center rounded-[10px] border border-[#155c39] bg-[#b0b0b0] pr-5 pl-5">
            <Shield className="h-[70px] w-[62px]" />
            <h1 className="ml-5 w-[85px] text-[20px] font-medium text-[#222]">S.T.O.P.</h1>
            <div className="mt-[15px] flex-1 self-stretch rounded-t-[5px] border border-b-0 border-[#155c39]" />
          </div>
          <button type="button" aria-label="Menú" className="relative mt-[43px] flex h-20 w-[33px] flex-col justify-center gap-[5px] bg-[#155c39] pl-[5px]">
            <span className="h-0.5 w-[18px] bg-[#b5b5b5]" />
            <span className="h-0.5 w-[18px] bg-[#b5b5b5]" />
            <span className="h-0.5 w-[18px] bg-[#b5b5b5]" />
          </button>
          <div className="absolute right-0 bottom-0 flex w-8 flex-col border-t border-l border-[#777]">
            <button type="button" aria-label="Acercar" className="relative flex h-[37px] items-center justify-center pl-1.5"><span className="absolute h-[15px] w-[3px] bg-black" /><span className="h-[3px] w-[15px] bg-black" /></button>
            <button type="button" aria-label="Alejar" className="flex h-8 items-center justify-center border-t border-[#777] pl-1.5"><span className="h-0.5 w-[15px] bg-black" /></button>
          </div>
        </div>
        <div className="flex w-3 shrink-0 justify-center bg-[#f0f0f0] pt-[7px]"><Arrow dir="up" /></div>
        <Dialog />
      </main>
    </div>
  );
}
